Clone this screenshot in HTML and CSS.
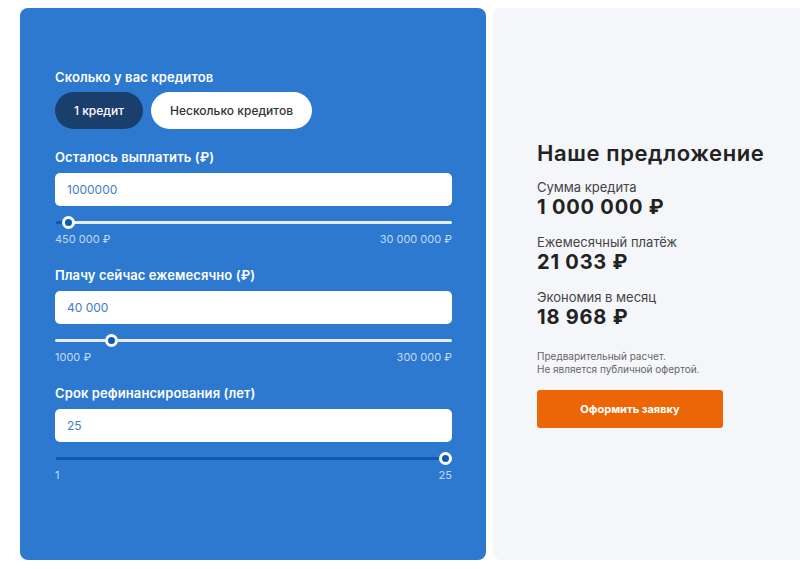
FILE: index.html
```html
<!DOCTYPE html>
<html lang="ru">
<head>
<meta charset="utf-8">
<title>Рефинансирование</title>
<link rel="stylesheet" href="styles.css">
</head>
<body>
<div class="page">
  <section class="calc">
    <div class="group group-first">
      <div class="label">Сколько у вас кредитов</div>
      <div class="toggle">
        <button class="pill pill-active">1 кредит</button>
        <button class="pill">Несколько кредитов</button>
      </div>
    </div>

    <div class="group">
      <div class="label">Осталось выплатить (₽)</div>
      <div class="field">1000000</div>
      <div class="slider">
        <div class="track"><div class="fill" style="width: 13px"></div></div>
        <div class="thumb-area"><span class="thumb" style="left: 1.7%"></span></div>
      </div>
      <div class="range"><span>450 000 ₽</span><span>30 000 000 ₽</span></div>
    </div>

    <div class="group">
      <div class="label">Плачу сейчас ежемесячно (₽)</div>
      <div class="field">40 000</div>
      <div class="slider">
        <div class="track"></div>
        <div class="thumb-area"><span class="thumb" style="left: 12.9%"></span></div>
      </div>
      <div class="range"><span>1000 ₽</span><span>300 000 ₽</span></div>
    </div>

    <div class="group">
      <div class="label">Срок рефинансирования (лет)</div>
      <div class="field">25</div>
      <div class="slider">
        <div class="track"><div class="fill" style="width: 100%"></div></div>
        <div class="thumb-area"><span class="thumb" style="left: 100%"></span></div>
      </div>
      <div class="range"><span>1</span><span>25</span></div>
    </div>
  </section>

  <section class="offer">
    <h2 class="offer-title">Наше предложение</h2>
    <div class="stat">
      <div class="stat-name">Сумма кредита</div>
      <div class="stat-value">1 000 000 ₽</div>
    </div>
    <div class="stat">
      <div class="stat-name">Ежемесячный платёж</div>
      <div class="stat-value">21 033 ₽</div>
    </div>
    <div class="stat">
      <div class="stat-name">Экономия в месяц</div>
      <div class="stat-value">18 968 ₽</div>
    </div>
    <p class="note">Предварительный расчет.<br>Не является публичной офертой.</p>
    <button class="cta">Оформить заявку</button>
  </section>
</div>
</body>
</html>
```

FILE: styles.css
```css
* { box-sizing: border-box; }
html, body { margin: 0; padding: 0; }
body {
  background: #ffffff;
  font-family: Inter, "Open Sans", "DejaVu Sans", sans-serif;
  overflow: hidden;
  width: 800px;
  height: 569px;
}
.page {
  display: flex;
  gap: 7px;
  padding: 8px 0 0 20px;
  width: 840px;
}
.calc {
  width: 466px;
  height: 552px;
  background: #2d79cf;
  border-radius: 8px;
  padding: 61px 34px 0 35px;
  display: flex;
  flex-direction: column;
  gap: 21px;
}
.group { display: flex; flex-direction: column; }
.label {
  color: #ffffff;
  font-size: 13px;
  font-weight: 600;
  line-height: 16px;
  letter-spacing: 0.1px;
  margin-bottom: 8px;
}
.group-first .label { margin-bottom: 7px; }
.group-first { margin-bottom: -1px; }
.toggle { display: flex; gap: 8px; }
.pill {
  height: 37px;
  border: none;
  border-radius: 19px;
  font-family: inherit;
  font-size: 12px;
  font-weight: 500;
  padding: 0;
  width: 161px;
  background: #ffffff;
  color: #333333;
  cursor: pointer;
}
.pill-active {
  background: #1b3f6c;
  color: #ffffff;
  width: 88px;
}
.field {
  height: 33px;
  background: #ffffff;
  border-radius: 5px;
  padding: 0 12px;
  display: flex;
  align-items: center;
  font-size: 12px;
  color: #3f7ccc;
}
.slider {
  position: relative;
  height: 13px;
  margin-top: 10px;
}
.track {
  position: absolute;
  left: 0;
  right: 0;
  top: 5px;
  height: 3px;
  background: #e8eef6;
  border-radius: 2px;
}
.fill {
  height: 100%;
  background: #0a5ab6;
  border-radius: 2px;
}
.thumb-area {
  position: absolute;
  left: 6.5px;
  right: 6.5px;
  top: 0;
  height: 13px;
}
.thumb {
  position: absolute;
  top: 0;
  width: 13px;
  height: 13px;
  margin-left: -6.5px;
  border-radius: 50%;
  background: #0a5ab6;
  border: 3px solid #ffffff;
}
.range {
  display: flex;
  justify-content: space-between;
  margin-top: 3px;
  font-size: 11px;
  line-height: 14px;
  color: rgba(255, 255, 255, 0.72);
}
.offer {
  width: 320px;
  height: 552px;
  background: #f5f6fa;
  border-radius: 8px;
  padding: 0 0 0 44px;
  display: flex;
  flex-direction: column;
  justify-content: center;
  color: #222222;
}
.offer-title {
  margin: 0 0 13px;
  font-size: 22px;
  font-weight: 600;
  line-height: 26px;
  letter-spacing: 0.6px;
  color: #222222;
}
.stat { margin-bottom: 15px; }
.stat-name {
  font-size: 13px;
  line-height: 16px;
  color: #444444;
}
.stat-value {
  font-size: 20px;
  font-weight: 700;
  line-height: 24px;
  color: #222222;
  letter-spacing: 0.8px;
}
.note {
  margin: 6px 0 14px;
  font-size: 10px;
  line-height: 13px;
  color: #666666;
}
.cta {
  width: 186px;
  height: 38px;
  border: none;
  border-radius: 3px;
  background: #ec6608;
  color: #ffffff;
  font-family: inherit;
  font-size: 11px;
  font-weight: 700;
  cursor: pointer;
}
```
